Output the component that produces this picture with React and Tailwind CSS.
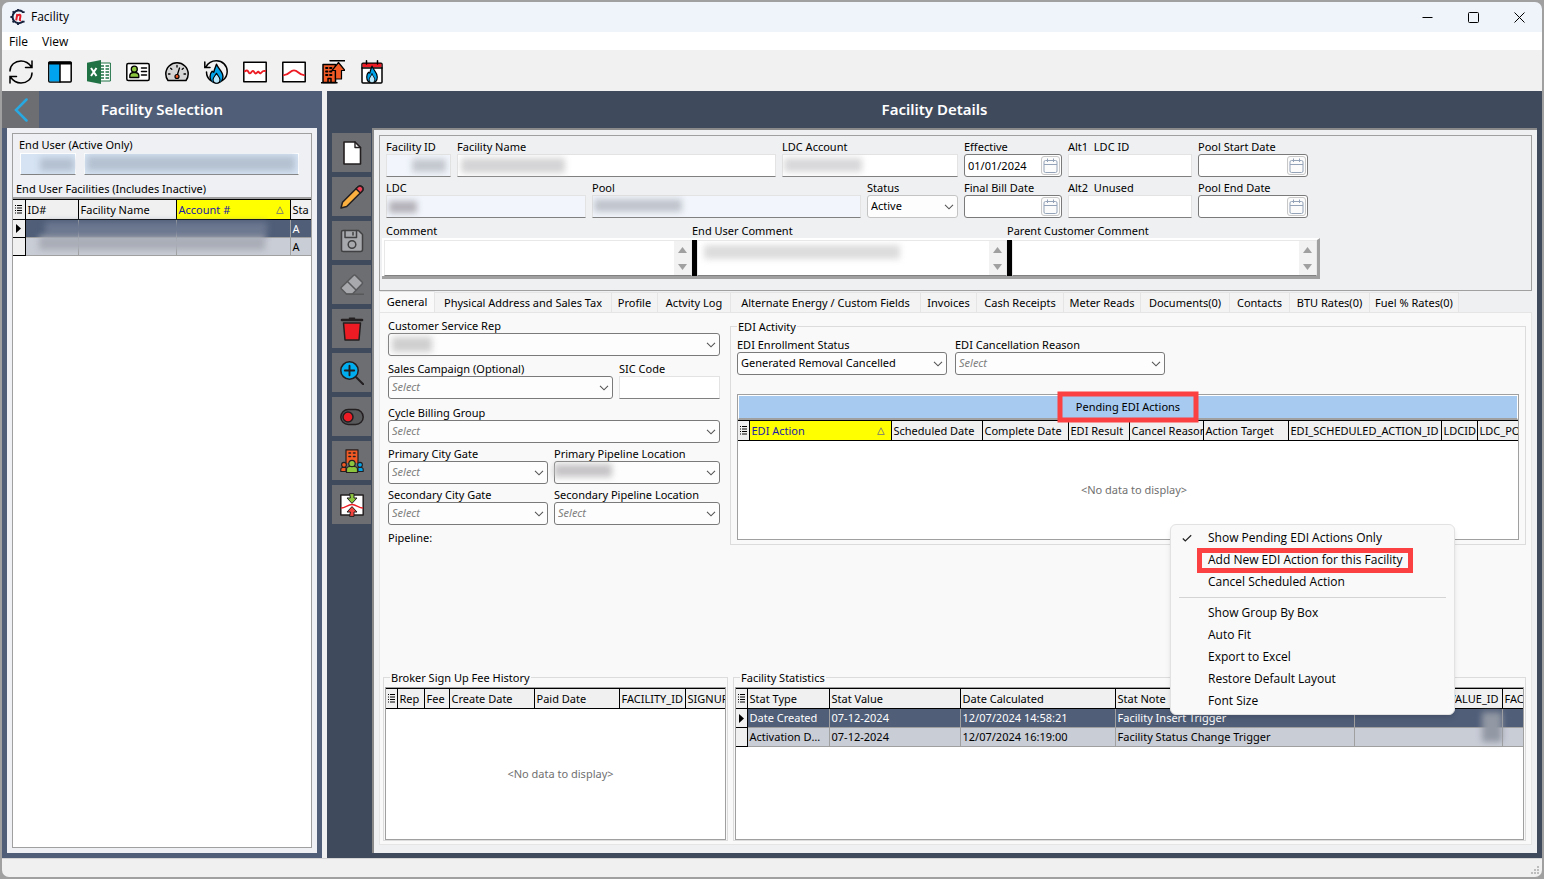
import React, { useId } from "react";

const INK = "#231f20";

/* ---------- small drawings ---------- */

function Svg({ size = 24, children }) {
  return (
    <svg width={size} height={size} viewBox="0 0 24 24" fill="none" stroke="#000" strokeWidth="1.5" strokeLinecap="round" strokeLinejoin="round" aria-hidden="true" className="block shrink-0">
      {children}
    </svg>
  );
}

function AppLogo() {
  return (
    <svg width="16" height="16" viewBox="0 0 16 16" fill="none" aria-hidden="true">
      <path d="M12.6 2.8A6.3 6.3 0 1 0 13 12.6" stroke="#14213d" strokeWidth="2" />
      <path d="M8 0v2M2.6 2.4l1.4 1.3M.4 8h2M2.6 13.4 4 12M8 14v2M12 3.2h2.6M12 12.6h2.6" stroke="#14213d" strokeWidth="1.8" />
      <path d="M6.2 11.4 7.3 5M7 7.2c1.4-2 3.8-2 3.4.2l-.6 3.2c0 .6.4.8 1.2.5" stroke="#e11d2a" strokeWidth="2" />
    </svg>
  );
}

function Flame({ transform }) {
  return (
    <g transform={transform} strokeWidth="1.3">
      <path d="M0 -9C1 -5 6 -2 6 3.5C6 8 3 10 0 10C-3 10 -6 8 -6 3.5C-6 1 -5 -1 -4 -2L-2.5 -1C-2 -4 -1 -6 0 -9Z" fill="#00a3e8" />
      <path d="M0 0C1 2.5 3.2 4 3.2 6.6C3.2 9 1.6 10 0 10C-1.6 10 -3.2 9 -3.2 6.6C-3.2 4 -1 2.5 0 0Z" fill="#b5e6fa" strokeWidth="1" />
    </g>
  );
}

const IconRefresh = () => (
  <Svg>
    <path d="M1 11C1 5 6 1 12 1C16.500 1 20 3.300 22.600 7M23 1V7.500H16.500M23 13C23 19 18 23 12 23C7.500 23 4 20.700 1.400 17M1 23V16.500H7.500" strokeLinejoin="miter" />
  </Svg>
);
const IconPanels = () => (
  <Svg>
    <rect x="0.8" y="2" width="22.400" height="20" rx="1" fill="#fff" />
    <rect x="1.500" y="4" width="10.500" height="17.400" fill="#00a3f0" stroke="none" />
    <path d="M12 4V22" />
    <path d="M1.500 3.200H22.500" strokeWidth="2.800" />
  </Svg>
);
const IconExcel = () => (
  <Svg>
    <rect x="13" y="3" width="10.400" height="18" fill="#fff" stroke="#207245" strokeWidth="1" />
    <path d="M14 6h3M18.500 6h3.500M14 9h3M18.500 9h3.500M14 12h3M18.500 12h3.500M14 15h3M18.500 15h3.500M14 18h3M18.500 18h3.500" stroke="#207245" strokeWidth="1.600" strokeLinecap="butt" />
    <path d="M0 2.700 14 0V24L0 21.300Z" fill="#207245" stroke="none" />
    <path d="M4 8 9.500 16M9.500 8 4 16" stroke="#fff" strokeWidth="2" strokeLinecap="butt" />
  </Svg>
);
const IconId = () => (
  <Svg>
    <rect x="0.8" y="3.500" width="22.400" height="17" rx="1.500" fill="#fff" />
    <path d="M3.800 17.500V15.500C3.800 13.500 5 12.800 7 12.600H9.600C11.600 12.800 12.800 13.500 12.800 15.500V17.500Z" fill="#8cc63f" strokeWidth="1.300" />
    <circle cx="8.300" cy="9.200" r="3" fill="#8cc63f" strokeWidth="1.300" />
    <path d="M15.500 8H20.500M15.500 11.500H20.500M15.500 15H20.500" />
  </Svg>
);
const IconGauge = () => (
  <Svg>
    <path d="M3 20.500C1.500 18.500 0.800 16.500 0.800 14C0.800 7.500 6 2.800 12 2.800C18 2.800 23.200 7.500 23.200 14C23.200 16.500 22.500 18.500 21 20.500Z" fill="#d5d5d5" />
    <path d="M3.500 14H5M19 14H20.500M5.600 8.300 6.800 9.300M12 5.500V7M18.400 8.300 17.200 9.300M12 16 14.500 8" strokeWidth="1.300" />
    <circle cx="12" cy="16.500" r="2" fill="#f15a24" strokeWidth="1.200" />
  </Svg>
);
const IconFlameBack = () => (
  <Svg>
    <path d="M2 7C4 3 8 .8 12.500 .8C18.500 .8 23.200 5.500 23.200 11.500C23.200 15.500 21.500 18.500 18.500 20.500M.8 2V7.500H6M2.500 12C2.500 15.500 4 18.500 6.500 20.500" strokeLinejoin="miter" />
    <Flame transform="translate(12.500 13.200) scale(1.08 1)" />
  </Svg>
);
const IconWave = () => (
  <Svg>
    <rect x="0.8" y="2.200" width="22.400" height="19.600" fill="#fff" />
    <path d="M2 11.300C3.500 10 4.500 10.300 5.500 12C6.500 14 7.500 13.700 8.500 12C9.500 10.300 10.300 10.600 11.500 12.500C12.500 14.200 13.500 13.400 14.500 12C15.500 10.600 16.300 13.800 17.500 13.300C19 12.700 19 10.300 22 11" stroke="#ed1c24" strokeWidth="1.900" />
  </Svg>
);
const IconCurve = () => (
  <Svg>
    <rect x="0.8" y="2.200" width="22.400" height="19.600" fill="#fff" />
    <path d="M2 15.200C7 15.200 8 10.300 12 10.300C16 10.300 17 15.200 22 15.200" stroke="#ed1c24" strokeWidth="1.800" />
  </Svg>
);
const IconBuildingUp = () => (
  <Svg>
    <path d="M9 .8H24" />
    <path d="M2 22.500V4.500H14.500V22.500Z" fill="#f15a24" />
    <path d="M5 8h1.500M5 11.500h1.500M5 15h1.500M9 8h1.500M9 11.500h1.500M9 15h1.500" strokeWidth="1.800" />
    <path d="M7 22V18.500H10V22M0 22.700H16" />
    <path d="M17.500 2.500 24 10.500H20.500V19H14.500V10.500H11Z" fill="#f15a24" strokeWidth="1.200" />
  </Svg>
);
const IconCalendarFlame = () => (
  <Svg>
    <rect x="2" y="3.300" width="20" height="19.800" rx="1" fill="#fff" />
    <path d="M2.600 5.500H21.400" stroke="#ed1c24" strokeWidth="3.600" strokeLinecap="butt" />
    <path d="M2 8H22M6.500 .8V4M17.500 .8V4" />
    <Flame transform="translate(12 14) scale(.88)" />
  </Svg>
);

const IconNew = () => (
  <Svg>
    <path d="M4 1H15L20.500 6.500V23H4Z" fill="#fff" stroke={INK} strokeWidth="1.600" />
    <path d="M15 1V6.500H20.500" stroke={INK} strokeWidth="1.400" />
  </Svg>
);
const IconEdit = () => (
  <Svg>
    <path d="M1 23 2.500 17.300 17.500 2.200C19 .6 20.800 .6 22 1.900C23.400 3.200 23.400 5 21.800 6.500L6.700 21.500Z" fill="#fbb040" stroke={INK} />
    <path d="M16 3.700 17.500 2.200C19 .6 20.800 .6 22 1.900C23.400 3.200 23.400 5 21.800 6.500L20.300 8Z" fill="#ee4056" stroke={INK} />
  </Svg>
);
const IconSave = () => (
  <Svg>
    <path d="M3 1.500H18.500L22.500 5.500V20.500Q22.500 22.500 20.500 22.500H3Q1.500 22.500 1.500 21V3Q1.500 1.500 3 1.500Z" fill="#a7a9ac" stroke="#414042" />
    <path d="M5 1.500V8.500H16.500V1.500M13 3.500V6" stroke="#414042" />
    <circle cx="12" cy="15.500" r="3.800" stroke="#414042" />
  </Svg>
);
const IconErase = () => (
  <Svg>
    <path d="M1.200 14.500 13.500 2.500Q14.500 1.700 15.500 2.500L22 9Q23 10 22 11L12.500 21H6.500L1.500 16Q.8 15.200 1.200 14.500Z" fill="#a7a9ac" stroke="#58595b" />
    <path d="M7.500 8.500 16 17M6.500 21.200H23.500" stroke="#58595b" />
  </Svg>
);
const IconDelete = () => (
  <Svg>
    <path d="M3.500 6H20.500L19 23H5Z" fill="#ed1c24" stroke={INK} />
    <path d="M2 3H22" stroke={INK} strokeWidth="2.600" />
    <path d="M9.500 1.300H14.500" stroke={INK} strokeWidth="1.600" />
  </Svg>
);
const IconZoomIn = () => (
  <Svg>
    <circle cx="9.500" cy="9.500" r="8.700" fill="#00aeef" stroke={INK} />
    <path d="M9.500 4.800V14.200M4.800 9.500H14.200" stroke={INK} strokeWidth="1.900" />
    <path d="M16.200 16.200 23.200 23.200" stroke={INK} strokeWidth="2" />
  </Svg>
);
const IconToggle = () => (
  <Svg>
    <rect x="0.8" y="4.500" width="22.400" height="15" rx="7.500" fill="#58595b" stroke={INK} />
    <circle cx="8" cy="12" r="5" fill="#ed1c24" stroke={INK} />
  </Svg>
);
const IconPeople = () => (
  <Svg>
    <path d="M6 14V.8H18V14" fill="#f15a24" stroke={INK} strokeWidth="1.200" />
    <path d="M9 4h1.500M13.500 4H15M9 7.500h1.500M13.500 7.500H15" stroke={INK} strokeWidth="1.600" />
    <path d="M.8 22.500V20.500Q.8 18.500 3 18.500H6V22.500Z" fill="#f15a24" stroke={INK} strokeWidth="1.100" />
    <circle cx="4" cy="15.800" r="2.400" fill="#f15a24" stroke={INK} strokeWidth="1.100" />
    <path d="M23.200 22.500V20.500Q23.200 18.500 21 18.500H18V22.500Z" fill="#00a3e8" stroke={INK} strokeWidth="1.100" />
    <circle cx="20" cy="15.800" r="2.400" fill="#00a3e8" stroke={INK} strokeWidth="1.100" />
    <path d="M6.500 23.500V20.500Q6.500 17.500 10 17.500H14Q17.500 17.500 17.500 20.500V23.500Z" fill="#8cc63f" stroke={INK} strokeWidth="1.200" />
    <circle cx="12" cy="14.500" r="3.200" fill="#8cc63f" stroke={INK} strokeWidth="1.200" />
  </Svg>
);
const IconBalance = () => (
  <Svg>
    <rect x="0.8" y="2" width="22.400" height="20" fill="#fff" stroke={INK} />
    <path d="M1.500 15C5 15 8 11.500 12 11.500C16 11.500 19 15 22.500 15" stroke="#ed1c24" strokeWidth="1.300" />
    <path d="M10 .6H14V5H17L12 10.400 7 5H10Z" fill="#8cc63f" stroke={INK} strokeWidth="1" />
    <path d="M10 23.400H14V19H17L12 13.600 7 19H10Z" fill="#f0443c" stroke={INK} strokeWidth="1" />
  </Svg>
);

const Chevron = () => (
  <svg width="10" height="6" viewBox="0 0 10 6" fill="none" stroke="#555" strokeWidth="1.1" aria-hidden="true" className="pointer-events-none absolute top-1/2 right-[4px] -translate-y-1/2">
    <path d="M1 .8 5 4.800 9 .8" />
  </svg>
);

/* ---------- form controls ---------- */

const label = "block h-[13px] leading-[11px] whitespace-nowrap";
const legend = "block h-[13px] px-px leading-[13px] whitespace-nowrap";

function Redacted({ className }) {
  return <span aria-hidden="true" className={"pointer-events-none absolute blur-[3px] " + className} />;
}

function TextField({ text, width, fill = "bg-white", children }) {
  const id = useId();
  return (
    <div className={width}>
      <label htmlFor={id} className={label}>{text}</label>
      <div className="relative overflow-hidden">
        <input id={id} className={"block h-[23px] w-full border border-[#e3e3e3] border-b-[#808080] px-1 outline-none " + fill} />
        {children}
      </div>
    </div>
  );
}

function SelectField({ text, width, value, soft, children }) {
  const id = useId();
  return (
    <div className={width}>
      <label htmlFor={id} className={label}>{text}</label>
      <div className="relative">
        <select
          id={id}
          defaultValue={value}
          className={
            "block h-[23px] w-full appearance-none rounded-[3px] border bg-[#fdfdfd] pr-4 pl-[3px] outline-none " +
            (soft ? "border-[#c4c4c4] " : "border-[#7a7a7a] ") +
            (value === "Select" ? "text-[#808080] italic" : "text-black")
          }
        >
          <option>{value}</option>
        </select>
        <Chevron />
        {children}
      </div>
    </div>
  );
}

function DateField({ text, width, value = "" }) {
  const id = useId();
  return (
    <div className={width}>
      <label htmlFor={id} className={label}>{text}</label>
      <div className="flex h-[23px] items-center rounded-[3px] border border-[#7a7a7a] bg-white pr-px">
        <input id={id} defaultValue={value} className="h-full w-0 flex-1 bg-transparent pl-[3px] outline-none" />
        <button aria-label={"Pick " + text} className="flex size-[19px] items-center justify-center rounded-[3px] border border-[#c8c8c8] bg-[#fbfbfb]">
          <svg width="15" height="15" viewBox="0 0 15 15" fill="none" stroke="#94a3b8" aria-hidden="true">
            <rect x="1" y="2.500" width="13" height="12" rx="1.500" />
            <path d="M1 6.500H14M4.500 .5V4M10.500 .5V4" />
          </svg>
        </button>
      </div>
    </div>
  );
}

function CommentBox({ text, width, edge, end, children }) {
  const id = useId();
  return (
    <div className={width}>
      <label htmlFor={id} className={label + (edge ? "" : " pl-1")}>{text}</label>
      <div className={"flex h-[41px] border-t-2 border-b-[3px] border-t-white border-b-[#a0a0a0] " + (end ? "border-r-[3px] border-r-[#a0a0a0]" : "")}>
        <div className={edge ? "w-[5px] bg-black" : "w-[2px] bg-white"} />
        <div className="relative flex flex-1 overflow-hidden border border-[#e8e8e8] border-b-[#808080] bg-white">
          <textarea id={id} className="h-full w-0 flex-1 resize-none outline-none" />
          <div className="flex w-[17px] flex-col bg-[#f2f2f2]">
            <button aria-label={"Scroll up " + text} className="flex flex-1 items-center justify-center">
              <svg width="9" height="6" viewBox="0 0 9 6" aria-hidden="true"><path d="M4.500 0 9 6H0Z" fill="#a0a0a0" /></svg>
            </button>
            <button aria-label={"Scroll down " + text} className="flex flex-1 items-center justify-center">
              <svg width="9" height="6" viewBox="0 0 9 6" aria-hidden="true"><path d="M4.500 6 9 0H0Z" fill="#a0a0a0" /></svg>
            </button>
          </div>
          {children}
        </div>
      </div>
    </div>
  );
}

/* ---------- grids ---------- */

function Grid({ name, columns, rows = [], lead = "w-[11px]", rowHeight = "h-[19px]" }) {
  return (
    <div className="overflow-hidden">
      <table aria-label={name} className="w-full table-fixed border-collapse">
        <colgroup>
          <col className={lead} />
          {columns.map((c) => <col key={c.name} className={c.width} />)}
        </colgroup>
        <thead>
          <tr className="h-[20px]">
            <th className="border border-l-0 border-black bg-[#f0f0f0] p-0">
              <svg width="7" height="9" viewBox="0 0 7 9" stroke="#000" aria-hidden="true" className="mx-auto">
                <path d="M0 .5H1M2 .5H7M0 3H1M2 3H7M0 5.500H1M2 5.500H7M0 8H1M2 8H7" />
              </svg>
            </th>
            {columns.map((c, i) => (
              <th
                key={c.name}
                className={
                  "overflow-hidden border-y border-black px-[2px] py-0 text-left leading-[17px] font-normal whitespace-nowrap " +
                  (i < columns.length - 1 ? "border-r " : "") +
                  (c.sorted ? "bg-[#ffff00] text-[#1a1aa6]" : "bg-[#f0f0f0]")
                }
              >
                {c.sorted ? (
                  <span className="flex items-center justify-between pr-1">
                    {c.name}
                    <svg width="8" height="8" viewBox="0 0 8 8" fill="none" stroke="#8c8c60" aria-hidden="true"><path d="M4 .8 7.300 7.500H.7Z" /></svg>
                  </span>
                ) : c.name}
              </th>
            ))}
          </tr>
        </thead>
        <tbody>
          {rows.map((row, r) => (
            <tr key={r} className={rowHeight + (r === 0 ? " bg-[#505e78] text-white" : " bg-[#c9cdd6] text-black")}>
              <td className="border border-l-0 border-black bg-[#f0f0f0] p-0">
                {r === 0 && <svg width="5" height="9" viewBox="0 0 5 9" aria-hidden="true" className="mx-auto"><path d="M0 0 5 4.500 0 9Z" fill="#000" /></svg>}
              </td>
              {row.map((cell, i) => (
                <td
                  key={i}
                  className={
                    "overflow-hidden border-b border-[#a0a0a0] py-0 pr-[6px] pl-[2px] leading-[16px] text-ellipsis whitespace-nowrap " +
                    (i < row.length - 1 ? "border-r" : "")
                  }
                >
                  {cell}
                </td>
              ))}
            </tr>
          ))}
        </tbody>
      </table>
    </div>
  );
}

const facilityColumns = [
  { name: "ID#", width: "w-[53px]" },
  { name: "Facility Name", width: "w-[98px]" },
  { name: "Account #", width: "w-[114px]", sorted: true },
  { name: "Sta", width: "w-auto" },
];
const ediColumns = [
  { name: "EDI Action", width: "w-[142px]", sorted: true },
  { name: "Scheduled Date", width: "w-[91px]" },
  { name: "Complete Date", width: "w-[86px]" },
  { name: "EDI Result", width: "w-[61px]" },
  { name: "Cancel Reason", width: "w-[74px]" },
  { name: "Action Target", width: "w-[85px]" },
  { name: "EDI_SCHEDULED_ACTION_ID", width: "w-[153px]" },
  { name: "LDCID", width: "w-[36px]" },
  { name: "LDC_POOL", width: "w-auto" },
];
const brokerColumns = [
  { name: "Rep", width: "w-[27px]" },
  { name: "Fee", width: "w-[25px]" },
  { name: "Create Date", width: "w-[85px]" },
  { name: "Paid Date", width: "w-[85px]" },
  { name: "FACILITY_ID", width: "w-[66px]" },
  { name: "SIGNUP_ID", width: "w-auto" },
];
const statColumns = [
  { name: "Stat Type", width: "w-[82px]" },
  { name: "Stat Value", width: "w-[131px]" },
  { name: "Date Calculated", width: "w-[155px]" },
  { name: "Stat Note", width: "w-[239px]" },
  { name: "FACILITY_STATUS_VALUE_ID", width: "w-[148px]" },
  { name: "FACILITY_ID", width: "w-auto" },
];
const statRows = [
  ["Date Created", "07-12-2024", "12/07/2024 14:58:21", "Facility Insert Trigger", "", ""],
  ["Activation Date", "07-12-2024", "12/07/2024 16:19:00", "Facility Status Change Trigger", "", ""],
];

const tabs = [
  ["Physical Address and Sales Tax", "w-[177px]"],
  ["Profile", "w-[46px]"],
  ["Actvity Log", "w-[73px]"],
  ["Alternate Energy / Custom Fields", "w-[190px]"],
  ["Invoices", "w-[56px]"],
  ["Cash Receipts", "w-[87px]"],
  ["Meter Reads", "w-[77px]"],
  ["Documents(0)", "w-[89px]"],
  ["Contacts", "w-[60px]"],
  ["BTU Rates(0)", "w-[80px]"],
  ["Fuel % Rates(0)", "w-[89px]"],
];

const toolbar = [
  ["Refresh", IconRefresh],
  ["Layout", IconPanels],
  ["Export to Excel", IconExcel],
  ["Customer", IconId],
  ["Meter", IconGauge],
  ["Gas history", IconFlameBack],
  ["Usage", IconWave],
  ["Forecast", IconCurve],
  ["Facility upload", IconBuildingUp],
  ["Gas calendar", IconCalendarFlame],
];
const sideTools = [
  ["New", IconNew],
  ["Edit", IconEdit],
  ["Save", IconSave],
  ["Clear", IconErase],
  ["Delete", IconDelete],
  ["Find", IconZoomIn],
  ["Toggle", IconToggle],
  ["Users", IconPeople],
  ["Balance", IconBalance],
];

/* ---------- page parts ---------- */

function TitleBar() {
  return (
    <header>
      <div className="flex h-[30px] items-center rounded-t-[7px] bg-[#eff3fa] pl-2">
        <AppLogo />
        <h1 className="flex-1 pl-[5px] font-['Open_Sans',sans-serif] text-[12px]">Facility</h1>
        <div className="flex">
          <button aria-label="Minimize" className="flex h-[28px] w-[45px] items-center justify-center">
            <svg width="11" height="11" viewBox="0 0 11 11" stroke="#000"><path d="M.5 5.500H10.500" /></svg>
          </button>
          <button aria-label="Maximize" className="flex h-[28px] w-[46px] items-center justify-center">
            <svg width="11" height="11" viewBox="0 0 11 11" stroke="#000" fill="none"><rect x=".5" y=".5" width="10" height="10" rx="1" /></svg>
          </button>
          <button aria-label="Close" className="flex h-[28px] w-[46px] items-center justify-center">
            <svg width="11" height="11" viewBox="0 0 11 11" stroke="#000"><path d="M.5 .5 10.500 10.500M10.500 .5 .5 10.500" /></svg>
          </button>
        </div>
      </div>
      <nav className="flex h-[18px] items-center gap-[14px] bg-white pt-[2px] pl-[7px] font-['Open_Sans',sans-serif] text-[12px] leading-[16px]">
        <button>File</button>
        <button>View</button>
      </nav>
      <div className="flex h-[41px] items-center gap-[15px] bg-[#f1f1f2] pt-[2px] pl-[7px]">
        {toolbar.map(([name, Icon]) => <button key={name} aria-label={name}><Icon /></button>)}
      </div>
    </header>
  );
}

function SelectionPanel() {
  const id = useId();
  return (
    <aside className="flex w-[320px] shrink-0 flex-col bg-[#505e78]">
      <div className="grid h-[37px] grid-cols-[37px_1fr_37px] items-center">
        <button aria-label="Back" className="flex h-full items-center justify-center bg-[#6d6e71]">
          <svg width="14" height="24" viewBox="0 0 14 24" fill="none" stroke="#29a9e1" strokeWidth="2.5" strokeLinecap="round"><path d="M12.500 1.500 2 12 12.500 22.500" /></svg>
        </button>
        <h2 className="text-center text-[15px] font-semibold text-white">Facility Selection</h2>
      </div>
      <div className="mx-[5px] mb-[5px] flex flex-1 flex-col bg-[#eff0f3] p-[5px]">
        <div className="flex flex-1 flex-col border border-[#a0a0a0]">
          <div className="px-[6px] pt-[5px]">
            <label htmlFor={id} className={label}>End User (Active Only)</label>
            <div className="mt-px flex gap-[8px] pl-px">
              <div className="relative w-[56px] overflow-hidden">
                <input id={id} className="block h-[22px] w-full border border-white border-b-[#808080] bg-[#d5e3f2] outline-none" />
                <Redacted className="top-[5px] right-[2px] h-[13px] w-[34px] bg-[#b4c0d0]" />
              </div>
              <div className="relative w-[215px] overflow-hidden">
                <input aria-label="End user name" className="block h-[22px] w-full border border-white border-b-[#808080] bg-[#d5e3f2] outline-none" />
                <Redacted className="top-[3px] left-[3px] h-[15px] w-[208px] bg-[#b4c1d0]" />
              </div>
            </div>
          </div>
          <p className={legend + " mt-[7px] mb-[2px] pl-[3px]"}>End User Facilities (Includes Inactive)</p>
          <div className="relative flex-1 border-t-2 border-[#a0a0a0] bg-white">
            <Grid name="End user facilities" columns={facilityColumns} rows={[["", "", "", "A"], ["", "", "", "A"]]} lead="w-[12px]" rowHeight="h-[18px]" />
            <Redacted className="top-[23px] left-[32px] h-[14px] w-[222px] bg-[#6c7890]" />
            <Redacted className="top-[37px] left-[26px] h-[14px] w-[226px] bg-[#a9adb6]" />
          </div>
        </div>
      </div>
    </aside>
  );
}

function FacilityHeader() {
  return (
    <section className="border border-[#a0a0a0] pt-[5px] pb-[11px]">
      <div className="flex flex-col gap-[5px] pl-[6px]">
        <div className="flex gap-[6px]">
          <TextField text="Facility ID" width="w-[65px]" fill="bg-[#f2f6fc]">
            <Redacted className="top-[5px] right-[5px] h-[13px] w-[34px] bg-[#c3c7ce]" />
          </TextField>
          <TextField text="Facility Name" width="w-[319px]">
            <Redacted className="top-[4px] left-[4px] h-[15px] w-[104px] bg-[#d4d4d6]" />
          </TextField>
          <TextField text="LDC Account" width="w-[176px]">
            <Redacted className="top-[4px] left-[2px] h-[14px] w-[78px] bg-[#d8d8da]" />
          </TextField>
          <DateField text="Effective" width="w-[98px]" value="01/01/2024" />
          <TextField text={"Alt1\u00a0 LDC ID"} width="w-[124px]" />
          <DateField text="Pool Start Date" width="w-[110px]" />
        </div>
        <div className="flex gap-[6px]">
          <TextField text="LDC" width="w-[200px]" fill="bg-[#f2f6fc]">
            <Redacted className="top-[6px] left-[3px] h-[12px] w-[28px] bg-[#b3b0b8]" />
          </TextField>
          <TextField text="Pool" width="w-[269px]" fill="bg-[#f2f6fc]">
            <Redacted className="top-[4px] left-[2px] h-[13px] w-[88px] bg-[#c0c4cc]" />
          </TextField>
          <SelectField text="Status" width="w-[91px]" value="Active" soft />
          <DateField text="Final Bill Date" width="w-[98px]" />
          <TextField text={"Alt2\u00a0 Unused"} width="w-[124px]" />
          <DateField text="Pool End Date" width="w-[110px]" />
        </div>
      </div>
      <div className="mt-[7px] flex pl-[2px]">
        <CommentBox text="Comment" width="w-[310px]" />
        <CommentBox text="End User Comment" width="w-[315px]" edge>
          <Redacted className="top-[4px] left-[6px] h-[14px] w-[196px] bg-[#dcdcdc]" />
        </CommentBox>
        <CommentBox text="Parent Customer Comment" width="w-[313px]" edge end />
      </div>
    </section>
  );
}

function TabBar() {
  return (
    <div role="tablist" className="flex items-end">
      <button role="tab" aria-selected="true" className="-mb-px h-[22px] w-[56px] border border-b-0 border-[#e5e5e5] bg-[#f9f9f9]">General</button>
      {tabs.map(([name, width]) => (
        <button key={name} role="tab" aria-selected="false" className={"h-[20px] border-t border-r border-[#e5e5e5] bg-[#f3f3f3] pt-px whitespace-nowrap " + width}>{name}</button>
      ))}
    </div>
  );
}

function ServiceForm() {
  return (
    <div className="flex w-[332px] shrink-0 flex-col">
      <SelectField text="Customer Service Rep" width="w-full" value="">
        <Redacted className="top-[4px] left-[4px] h-[15px] w-[40px] bg-[#cfcfcf]" />
      </SelectField>
      <div className="mt-[7px] flex gap-[6px]">
        <SelectField text="Sales Campaign (Optional)" width="w-[225px]" value="Select" />
        <TextField text="SIC Code" width="w-[101px]" />
      </div>
      <div className="mt-[8px]">
        <SelectField text="Cycle Billing Group" width="w-full" value="Select" />
      </div>
      <div className="mt-[5px] flex gap-[6px]">
        <SelectField text="Primary City Gate" width="w-[160px]" value="Select" />
        <SelectField text="Primary Pipeline Location" width="w-[166px]" value="">
          <Redacted className="top-[3px] left-0 h-[13px] w-[58px] bg-[#c6c4c6]" />
        </SelectField>
      </div>
      <div className="mt-[5px] flex gap-[6px]">
        <SelectField text="Secondary City Gate" width="w-[160px]" value="Select" />
        <SelectField text="Secondary Pipeline Location" width="w-[166px]" value="Select" />
      </div>
      <p className={label + " mt-[7px]"}>Pipeline:</p>
    </div>
  );
}

function EdiActivity() {
  return (
    <fieldset className="flex min-w-0 flex-1 flex-col border border-[#dcdcdc] px-[6px] pb-[4px]">
      <legend className={legend}>EDI Activity</legend>
      <div className="flex gap-[8px] pt-[6px]">
        <SelectField text="EDI Enrollment Status" width="w-[210px]" value="Generated Removal Cancelled" />
        <SelectField text="EDI Cancellation Reason" width="w-[210px]" value="Select" />
      </div>
      <div className="mt-[19px] flex h-[146px] flex-col border border-[#a0a0a0] bg-white">
        <div className="flex h-[25px] items-center justify-center border border-b-2 border-white border-b-[#a0a0a0] bg-[#a6caf0]">
          <div className="relative">
            Pending EDI Actions
            <span aria-hidden="true" className="absolute top-1/2 left-1/2 z-10 h-[31px] w-[141px] -translate-x-1/2 -translate-y-1/2 border-[5px] border-[#fb4141]" />
          </div>
        </div>
        <Grid name="Pending EDI actions" columns={ediColumns} />
        <p className="flex flex-1 items-center justify-center pl-[12px] text-[#707070]">&lt;No data to display&gt;</p>
      </div>
    </fieldset>
  );
}

function History() {
  return (
    <div className="flex gap-[5px] pr-[5px] pb-[3px] pl-[3px]">
      <fieldset className="w-[345px] shrink-0 border border-[#dcdcdc] px-px">
        <legend className={legend + " ml-[5px]"}>Broker Sign Up Fee History</legend>
        <div className="mt-[3px] flex h-[153px] flex-col border border-[#a0a0a0] bg-white">
          <Grid name="Broker sign up fee history" columns={brokerColumns} />
          <p className="flex flex-1 items-center justify-center pl-[10px] text-[#707070]">&lt;No data to display&gt;</p>
        </div>
      </fieldset>
      <fieldset className="min-w-0 flex-1 border border-[#dcdcdc] px-px">
        <legend className={legend + " ml-[5px]"}>Facility Statistics</legend>
        <div className="relative mt-[3px] h-[153px] border border-[#a0a0a0] bg-white">
          <Grid name="Facility statistics" columns={statColumns} rows={statRows} />
          <Redacted className="top-[24px] right-[21px] h-[30px] w-[20px] bg-[#9298a4]" />
        </div>
      </fieldset>
    </div>
  );
}

function MenuItem({ children, checked, marked }) {
  return (
    <button role="menuitem" className="relative flex h-[22px] w-full items-center pl-[37px] text-left">
      {checked && (
        <svg width="10" height="8" viewBox="0 0 10 8" fill="none" stroke="#222" strokeWidth="1.2" aria-hidden="true" className="absolute left-[11px]"><path d="M.8 4.500 3.300 7 9.200 1.200" /></svg>
      )}
      {children}
      {marked && <span aria-hidden="true" className="absolute top-[-1px] left-[26px] h-[25px] w-[216px] border-[5px] border-[#fb4141]" />}
    </button>
  );
}

function ContextMenu() {
  return (
    <div role="menu" className="absolute top-[524px] right-[89px] z-20 w-[285px] rounded-[6px] border border-[#e2e2e2] bg-[#f9f9f9] py-[2px] font-['Open_Sans',sans-serif] text-[12px] shadow-md">
      <MenuItem checked>Show Pending EDI Actions Only</MenuItem>
      <MenuItem marked>Add New EDI Action for this Facility</MenuItem>
      <MenuItem>Cancel Scheduled Action</MenuItem>
      <hr className="mx-[8px] my-[4px] border-t border-[#d4d4d4]" />
      <MenuItem>Show Group By Box</MenuItem>
      <MenuItem>Auto Fit</MenuItem>
      <MenuItem>Export to Excel</MenuItem>
      <MenuItem>Restore Default Layout</MenuItem>
      <MenuItem>Font Size</MenuItem>
    </div>
  );
}

export default function App() {
  return (
    <div className="relative flex min-h-screen flex-col overflow-hidden bg-[#a0a0a0] p-[2px] font-['Noto_Sans',sans-serif] text-[11px] text-black">
      <TitleBar />
      <main className="flex flex-1 gap-[5px] bg-[#f0f0f0]">
        <SelectionPanel />
        <section className="flex min-w-0 flex-1 flex-col bg-[#3f4a5d] px-[5px] pb-[5px]">
          <h2 className="flex h-[37px] items-center justify-center text-[15px] font-semibold text-white">Facility Details</h2>
          <div className="flex flex-1 gap-px">
            <div className="flex w-[39px] shrink-0 flex-col gap-[5px] pt-[5px]">
              {sideTools.map(([name, Icon]) => (
                <button key={name} aria-label={name} className="flex size-[39px] items-center justify-center bg-[#6d6e71]"><Icon /></button>
              ))}
            </div>
            <div className="flex min-w-0 flex-1 flex-col border-t-2 border-l-2 border-[#8a8a8a] bg-[#eff0f2] px-[5px] pt-[5px] pb-[8px]">
              <FacilityHeader />
              <TabBar />
              <div className="flex flex-1 flex-col justify-between border border-[#e5e5e5] bg-[#f9f9f9]">
                <div className="flex gap-[10px] pt-[7px] pr-[5px] pl-[8px]">
                  <ServiceForm />
                  <EdiActivity />
                </div>
                <History />
              </div>
            </div>
          </div>
        </section>
      </main>
      <footer className="flex h-[19px] items-end justify-end rounded-b-[7px] border-t border-[#d4d4d4] bg-[#f0f0f0] p-[3px]">
        <svg width="8" height="8" viewBox="0 0 8 8" fill="#bdbdbd" aria-hidden="true"><path d="M6 0h2v2H6zM3 3h2v2H3zM6 3h2v2H6zM0 6h2v2H0zM3 6h2v2H3zM6 6h2v2H6z" /></svg>
      </footer>
      <ContextMenu />
    </div>
  );
}
